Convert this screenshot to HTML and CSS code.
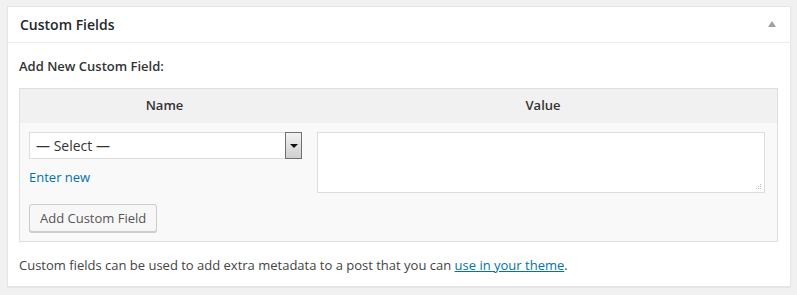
FILE: index.html
```html
<!DOCTYPE html>
<html>
<head>
<meta charset="utf-8">
<link rel="stylesheet" href="styles.css">
</head>
<body>
<div class="postbox">
  <div class="hndle">
    <h2 class="title">Custom Fields</h2>
    <span class="toggle" aria-hidden="true"></span>
  </div>
  <div class="inside">
    <p class="intro"><strong>Add New Custom Field:</strong></p>
    <table class="meta">
      <colgroup><col class="col-name"><col></colgroup>
      <thead>
        <tr><th>Name</th><th>Value</th></tr>
      </thead>
      <tbody>
        <tr>
          <td class="left">
            <div class="selectwrap">
              <select class="metaselect"><option>— Select —</option></select>
              <span class="dropbtn"><span class="arrow"></span></span>
            </div>
            <a href="#" class="enternew">Enter new</a>
          </td>
          <td class="right">
            <div class="textwrap">
              <textarea class="metavalue"></textarea>
              <svg class="grip" width="6" height="6" viewBox="0 0 6 6" aria-hidden="true">
                <rect x="4" y="0" width="1" height="1" fill="#bbb"/>
                <rect x="2" y="2" width="1" height="1" fill="#bbb"/>
                <rect x="4" y="2" width="1" height="1" fill="#bbb"/>
                <rect x="0" y="4" width="1" height="1" fill="#bbb"/>
                <rect x="2" y="4" width="1" height="1" fill="#bbb"/>
                <rect x="4" y="4" width="1" height="1" fill="#bbb"/>
              </svg>
            </div>
          </td>
        </tr>
        <tr>
          <td class="submitcell" colspan="2"><button class="button">Add Custom Field</button></td>
        </tr>
      </tbody>
    </table>
    <p class="note">Custom fields can be used to add extra metadata to a post that you can <a href="#">use in your theme</a>.</p>
  </div>
</div>
</body>
</html>
```

FILE: styles.css
```css
html, body {
  margin: 0;
  background: #f1f1f1;
}
body {
  padding: 6px 6px 8px 7px;
  font-family: "Open Sans", "Liberation Sans", sans-serif;
  font-size: 13px;
  color: #444;
}
.postbox {
  background: #fff;
  border: 1px solid #e5e5e5;
  box-shadow: 0 1px 1px rgba(0,0,0,0.04);
}
.hndle {
  display: flex;
  align-items: center;
  justify-content: space-between;
  padding: 8px 14px 8px 12px;
  border-bottom: 1px solid #eee;
}
.title {
  margin: 0;
  font-size: 14px;
  font-weight: 600;
  line-height: 19px;
  color: #23282d;
}
.toggle {
  width: 0;
  height: 0;
  border-left: 4px solid transparent;
  border-right: 4px solid transparent;
  border-bottom: 6px solid #a0a0a0;
  margin-top: -2px;
}
.inside {
  padding: 0 12px 0 11px;
}
.intro {
  margin: 13px 0 12px;
  line-height: 20px;
  color: #333;
}
.intro strong { font-weight: 600; }
.meta {
  width: 100%;
  border-collapse: separate;
  border-spacing: 0;
  border: 1px solid #dfdfdf;
  background: #f9f9f9;
}
.col-name { width: 289px; }
.meta th {
  background: #f1f1f1;
  padding: 6px 8px 8px;
  line-height: 20px;
  font-weight: 600;
  color: #333;
  text-align: center;
}
.meta td {
  vertical-align: top;
  padding: 0;
}
.left { padding: 9px 7px 0 9px !important; }
.right { padding: 9px 12px 0 8px !important; }
.selectwrap {
  position: relative;
  width: 273px;
  height: 27px;
}
.metaselect {
  -webkit-appearance: none;
  appearance: none;
  display: block;
  width: 100%;
  height: 27px;
  margin: 0;
  padding: 0 0 0 6px;
  border: 1px solid #ddd;
  background: #fff;
  font-family: "Open Sans", "Liberation Sans", sans-serif;
  font-size: 14px;
  color: #333;
  border-radius: 0;
}
.dropbtn {
  position: absolute;
  top: 0;
  right: 0;
  width: 15px;
  height: 25px;
  border: 1px solid #707070;
  background: linear-gradient(#f2f2f2, #cfcfcf);
  display: flex;
  align-items: center;
  justify-content: center;
}
.arrow {
  width: 0;
  height: 0;
  border-left: 4px solid transparent;
  border-right: 4px solid transparent;
  border-top: 4px solid #111;
}
.enternew {
  display: block;
  margin-top: 8px;
  line-height: 20px;
  color: #0073aa;
  text-decoration: none;
}
.textwrap {
  position: relative;
}
.metavalue {
  display: block;
  width: 100%;
  height: 61px;
  box-sizing: border-box;
  margin: 0;
  border: 1px solid #ddd;
  background: #fff;
  resize: none;
  font-family: "Open Sans", "Liberation Sans", sans-serif;
}
.grip {
  position: absolute;
  right: 3px;
  bottom: 3px;
}
.submitcell { padding: 11px 9px 9px !important; }
.button {
  height: 28px;
  padding: 0 10px 1px;
  border: 1px solid #ccc;
  border-radius: 3px;
  background: #f7f7f7;
  box-shadow: 0 1px 0 #ccc;
  font-family: "Open Sans", "Liberation Sans", sans-serif;
  font-size: 13px;
  line-height: 26px;
  color: #555;
  vertical-align: top;
}
.note {
  margin: 13px 0 11px;
  line-height: 20px;
}
.note a {
  color: #0073aa;
  text-decoration: underline;
}
```
